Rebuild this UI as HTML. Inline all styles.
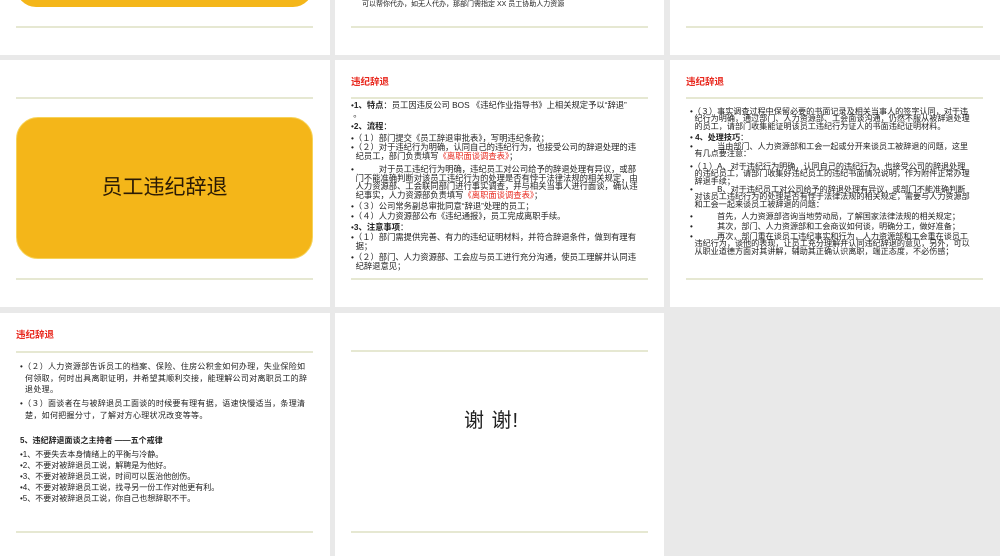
<!DOCTYPE html>
<html><head><meta charset="utf-8"><style>
*{margin:0;padding:0;box-sizing:border-box}
body{width:1000px;height:556px;background:#e9e9e9;position:relative;overflow:hidden;font-family:"Liberation Sans","Noto Sans CJK SC",sans-serif;color:#222}
.s{position:absolute;background:#fff;overflow:hidden}
.ln{position:absolute;left:16px;width:297px;height:2px;background:#e6e8d2}
.t{position:absolute;left:16px;font-size:9.5px;font-weight:bold;color:#e8281e}
.tx{position:absolute;white-space:nowrap;font-size:8.3px;line-height:8.5px;color:#222}
.c3{font-size:8.1px;line-height:7.4px}
.r{color:#e8281e}
</style></head><body>
<!-- row 1 -->
<div class="s" style="left:0;top:0;width:330px;height:55px">
 <div style="position:absolute;left:16px;top:-60px;width:297px;height:67px;background:#f4b619;border-radius:20px"></div>
 <div class="ln" style="top:26px"></div>
</div>
<div class="s" style="left:335px;top:0;width:329px;height:55px">
 <div class="tx" style="left:27px;top:1px;font-size:7px;line-height:8px">可以帮你代办，如无人代办，那部门需指定 XX 员工协助人力资源</div>
 <div class="ln" style="top:26px"></div>
</div>
<div class="s" style="left:670px;top:0;width:330px;height:55px">
 <div class="ln" style="top:26px"></div>
</div>
<!-- row 2 -->
<div class="s" style="left:0;top:60px;width:330px;height:247px">
 <div class="ln" style="top:37px"></div>
 <div style="position:absolute;left:16px;top:57px;width:297px;height:142px;background:#f4b619;border-radius:22px;border:1px solid #f6d35a"></div>
 <div style="position:absolute;left:16px;top:57px;width:297px;height:142px;line-height:142px;text-align:center;font-size:21px;color:#2a1a05">员工违纪辞退</div>
 <div class="ln" style="top:218px"></div>
</div>
<div class="s" style="left:335px;top:60px;width:329px;height:247px">
 <div class="t" style="top:14px">违纪辞退</div>
 <div class="ln" style="top:37px"></div>
 <div class="tx" style="left:16px;top:41px">•<b>1、特点</b>：员工因违反公司 BOS 《违纪作业指导书》上相关规定予以“辞退”<br>&nbsp;。</div>
 <div class="tx" style="left:16px;top:62px">•<b>2、流程</b>：</div>
 <div class="tx" style="left:16px;top:74px">•（１）部门提交《员工辞退审批表》，写明违纪条款；</div>
 <div class="tx" style="left:16px;top:83px">•（２）对于违纪行为明确，认同自己的违纪行为，也接受公司的辞退处理的违<br>&nbsp;&nbsp;纪员工，部门负责填写<span class="r">《离职面谈调查表》</span>；</div>
 <div class="tx" style="left:16px;top:105px">•　　　对于员工违纪行为明确，违纪员工对公司给予的辞退处理有异议，或部<br>&nbsp;&nbsp;门不能准确判断对该员工违纪行为的处理是否有悖于法律法规的相关规定，由<br>&nbsp;&nbsp;人力资源部、工会联同部门进行事实调查，并与相关当事人进行面谈，确认违<br>&nbsp;&nbsp;纪事实，人力资源部负责填写<span class="r">《离职面谈调查表》</span>；</div>
 <div class="tx" style="left:16px;top:142px">•（３）公司常务副总审批同意“辞退”处理的员工；</div>
 <div class="tx" style="left:16px;top:152px">•（４）人力资源部公布《违纪通报》，员工完成离职手续。</div>
 <div class="tx" style="left:16px;top:163px">•<b>3、注意事项</b>：</div>
 <div class="tx" style="left:16px;top:173px">•（１）部门需提供完善、有力的违纪证明材料，并符合辞退条件，做到有理有<br>&nbsp;&nbsp;据；</div>
 <div class="tx" style="left:16px;top:193px">•（２）部门、人力资源部、工会应与员工进行充分沟通，使员工理解并认同违<br>&nbsp;&nbsp;纪辞退意见；</div>
 <div class="ln" style="top:218px"></div>
</div>
<div class="s" style="left:670px;top:60px;width:330px;height:247px">
 <div class="t" style="top:14px">违纪辞退</div>
 <div class="ln" style="top:37px"></div>
 <div class="tx c3" style="left:20px;top:48px">•（３）事实调查过程中保留必要的书面记录及相关当事人的签字认同，对于违<br>&nbsp;&nbsp;纪行为明确，通过部门、人力资源部、工会面谈沟通，仍然不服从被辞退处理<br>&nbsp;&nbsp;的员工，请部门收集能证明该员工违纪行为证人的书面违纪证明材料。</div>
 <div class="tx c3" style="left:20px;top:74px">• <b>4、处理技巧</b>：</div>
 <div class="tx c3" style="left:20px;top:83px">•　　　当由部门、人力资源部和工会一起或分开来谈员工被辞退的问题，这里<br>&nbsp;&nbsp;有几点要注意：</div>
 <div class="tx c3" style="left:20px;top:103px">•（１）A、对于违纪行为明确，认同自己的违纪行为，也接受公司的辞退处理<br>&nbsp;&nbsp;的违纪员工，请部门收集好违纪员工的违纪书面情况说明，作为附件正常办理<br>&nbsp;&nbsp;辞退手续；</div>
 <div class="tx c3" style="left:20px;top:126px">•　　　B、对于违纪员工对公司给予的辞退处理有异议，或部门不能准确判断<br>&nbsp;&nbsp;对该员工违纪行为的处理是否有悖于法律法规的相关规定，需要与人力资源部<br>&nbsp;&nbsp;和工会一起来谈员工被辞退的问题：</div>
 <div class="tx c3" style="left:20px;top:153px">•　　　首先，人力资源部咨询当地劳动局，了解国家法律法规的相关规定；</div>
 <div class="tx c3" style="left:20px;top:163px">•　　　其次，部门、人力资源部和工会商议如何谈，明确分工，做好准备；</div>
 <div class="tx c3" style="left:20px;top:173px">•　　　再次，部门重在谈员工违纪事实和行为，人力资源部和工会重在谈员工<br>&nbsp;&nbsp;违纪行为，谈他的表现，让员工充分理解并认同违纪辞退的意见，另外，可以<br>&nbsp;&nbsp;从职业道德方面对其讲解，辅助其正确认识离职，端正态度，不必伤感；</div>
 <div class="ln" style="top:218px"></div>
</div>
<!-- row 3 -->
<div class="s" style="left:0;top:313px;width:330px;height:243px">
 <div class="t" style="top:14px">违纪辞退</div>
 <div class="ln" style="top:38px"></div>
 <div class="tx" style="left:20px;top:48px;font-size:8px;line-height:11.5px;letter-spacing:0.3px">•（２）人力资源部告诉员工的档案、保险、住房公积金如何办理，失业保险如<br>&nbsp;&nbsp;何领取，何时出具离职证明，并希望其顺利交接，能理解公司对离职员工的辞<br>&nbsp;&nbsp;退处理。</div>
 <div class="tx" style="left:20px;top:85px;font-size:8px;line-height:11.5px;letter-spacing:0.3px">•（３）面谈者在与被辞退员工面谈的时候要有理有据，语速快慢适当，条理清<br>&nbsp;&nbsp;楚，如何把握分寸，了解对方心理状况改变等等。</div>
 <div class="tx" style="left:20px;top:124px;font-size:8px;font-weight:bold">5、违纪辞退面谈之主持者 ——五个戒律</div>
 <div class="tx" style="left:20px;top:137px;font-size:8px;line-height:10.9px">•1、不要失去本身情绪上的平衡与冷静。<br>•2、不要对被辞退员工说，解聘是为他好。<br>•3、不要对被辞退员工说，时间可以医治他创伤。<br>•4、不要对被辞退员工说，找寻另一份工作对他更有利。<br>•5、不要对被辞退员工说，你自己也想辞职不干。</div>
 <div class="ln" style="top:218px"></div>
</div>
<div class="s" style="left:335px;top:313px;width:329px;height:243px">
 <div class="ln" style="top:37px"></div>
 <div style="position:absolute;left:129px;top:96px;font-size:20px;line-height:24px;color:#222;letter-spacing:1px;white-space:nowrap">谢 谢!</div>
 <div class="ln" style="top:218px"></div>
</div>
</body></html>
